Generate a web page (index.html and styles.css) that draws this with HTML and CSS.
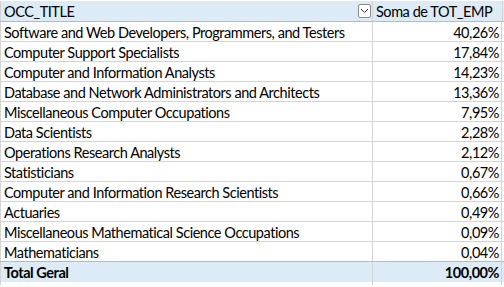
FILE: index.html
```html
<!DOCTYPE html>
<html>
<head>
<meta charset="utf-8">
<link rel="stylesheet" href="styles.css">
</head>
<body>
<div class="sheet">
  <div class="row head">
    <div class="c1">OCC_TITLE<span class="dd"><svg width="9" height="6" viewBox="0 0 9 6"><path d="M1 1 L4.5 4.5 L8 1" fill="none" stroke="#333" stroke-width="1"/></svg></span></div>
    <div class="c2 left">Soma de TOT_EMP</div>
  </div>
  <div class="row"><div class="c1">Software and Web Developers, Programmers, and Testers</div><div class="c2">40,26%</div></div>
  <div class="row"><div class="c1">Computer Support Specialists</div><div class="c2">17,84%</div></div>
  <div class="row"><div class="c1">Computer and Information Analysts</div><div class="c2">14,23%</div></div>
  <div class="row"><div class="c1">Database and Network Administrators and Architects</div><div class="c2">13,36%</div></div>
  <div class="row"><div class="c1">Miscellaneous Computer Occupations</div><div class="c2">7,95%</div></div>
  <div class="row"><div class="c1">Data Scientists</div><div class="c2">2,28%</div></div>
  <div class="row"><div class="c1">Operations Research Analysts</div><div class="c2">2,12%</div></div>
  <div class="row"><div class="c1">Statisticians</div><div class="c2">0,67%</div></div>
  <div class="row"><div class="c1">Computer and Information Research Scientists</div><div class="c2">0,66%</div></div>
  <div class="row"><div class="c1">Actuaries</div><div class="c2">0,49%</div></div>
  <div class="row"><div class="c1">Miscellaneous Mathematical Science Occupations</div><div class="c2">0,09%</div></div>
  <div class="row"><div class="c1">Mathematicians</div><div class="c2">0,04%</div></div>
  <div class="row total"><div class="c1">Total Geral</div><div class="c2">100,00%</div></div>
  <div class="row tail"><div class="c1"></div><div class="c2"></div></div>
</div>
</body>
</html>
```
FILE: styles.css
```css
html, body { margin: 0; padding: 0; background: #fff; }
body { font-family: Lato, "Open Sans", sans-serif; font-size: 14.5px; letter-spacing: -0.45px; color: #000; }
.sheet { padding-top: 1px; }
.row { display: flex; height: 19px; border-bottom: 1px solid #d4d4d4; }
.c1 { width: 368px; border-left: 1px solid #d4d4d4; border-right: 1px solid #d4d4d4; padding-left: 3px; line-height: 22px; position: relative; white-space: nowrap; }
.c2 { width: 126px; border-right: 1px solid #d4d4d4; padding-right: 2px; text-align: right; line-height: 22px; white-space: nowrap; }
.c2.left { text-align: left; padding-left: 3px; padding-right: 0; }
.head { height: 20px; background: #ddebf7; border-bottom: 1px solid #9bc2e6; }
.total { background: #ddebf7; border-top: 1px solid #9bc2e6; margin-top: -1px; font-weight: bold; height: 20px; border-bottom: none; }
.tail { height: 3px; border-bottom: none; }
.dd { position: absolute; right: 1px; top: 3px; width: 13px; height: 14px; border: 1px solid #8a8a8a; border-radius: 2px; background: #fff; box-sizing: border-box; display: flex; align-items: center; justify-content: center; }
```
